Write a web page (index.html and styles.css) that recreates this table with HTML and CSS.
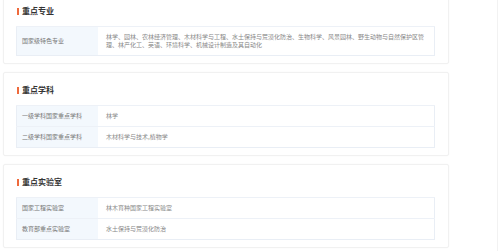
FILE: index.html
```html
<!DOCTYPE html>
<html lang="zh">
<head>
<meta charset="utf-8">
<link rel="stylesheet" href="styles.css">
</head>
<body>
<div class="page">
  <section class="card">
    <h2 class="title">重点专业</h2>
    <table class="tbl">
      <tr><td class="lab">国家级特色专业</td><td class="val">林学、园林、农林经济管理、木材科学与工程、水土保持与荒漠化防治、生物科学、风景园林、野生动物与自然保护区管理、林产化工、英语、环境科学、机械设计制造及其自动化</td></tr>
    </table>
  </section>
  <section class="card">
    <h2 class="title">重点学科</h2>
    <table class="tbl">
      <tr><td class="lab">一级学科国家重点学科</td><td class="val">林学</td></tr>
      <tr><td class="lab">二级学科国家重点学科</td><td class="val">木材科学与技术,植物学</td></tr>
    </table>
  </section>
  <section class="card">
    <h2 class="title">重点实验室</h2>
    <table class="tbl">
      <tr><td class="lab">国家工程实验室</td><td class="val">林木育种国家工程实验室</td></tr>
      <tr><td class="lab">教育部重点实验室</td><td class="val">水土保持与荒漠化防治</td></tr>
    </table>
  </section>
</div>
</body>
</html>
```
FILE: styles.css
```css
html, body {
  margin: 0;
  padding: 0;
  background: #fff;
}
body {
  font-family: "Noto Sans CJK SC", "Noto Sans", sans-serif;
  color: #666;
  height: 251px;
  overflow: hidden;
  border-right: 1px solid #f2f2f2;
  width: 497px;
}
.page {
  width: 446px;
  margin: -7px 0 0 3px;
  display: flex;
  flex-direction: column;
  gap: 8px;
}
.card {
  border: 1px solid #f1f1f1;
  border-radius: 2px;
  box-shadow: 0 0 2px rgba(0,0,0,0.03);
  padding: 9px 13px 7px 12px;
  background: #fff;
}
.title {
  margin: 0 0 7px 0;
  font-size: 8px;
  line-height: 16px;
  font-weight: bold;
  color: #333;
  display: flex;
  align-items: center;
  gap: 3px;
}
.title::before {
  content: "";
  width: 2px;
  height: 7px;
  background: #ef6a3c;
  margin-left: 1px;
}
.tbl {
  width: 419px;
  border-collapse: collapse;
  border: 1px solid #e9eef5;
  font-size: 6px;
  line-height: 8px;
}
.tbl td {
  border-top: 1px solid #edf1f7;
  padding: 6px 8px 6px 5px;
  vertical-align: middle;
}
.lab {
  width: 68px;
  background: #f3f8fd;
  color: #777;
}
.val {
  color: #888;
  padding-left: 8px !important;
}
```
